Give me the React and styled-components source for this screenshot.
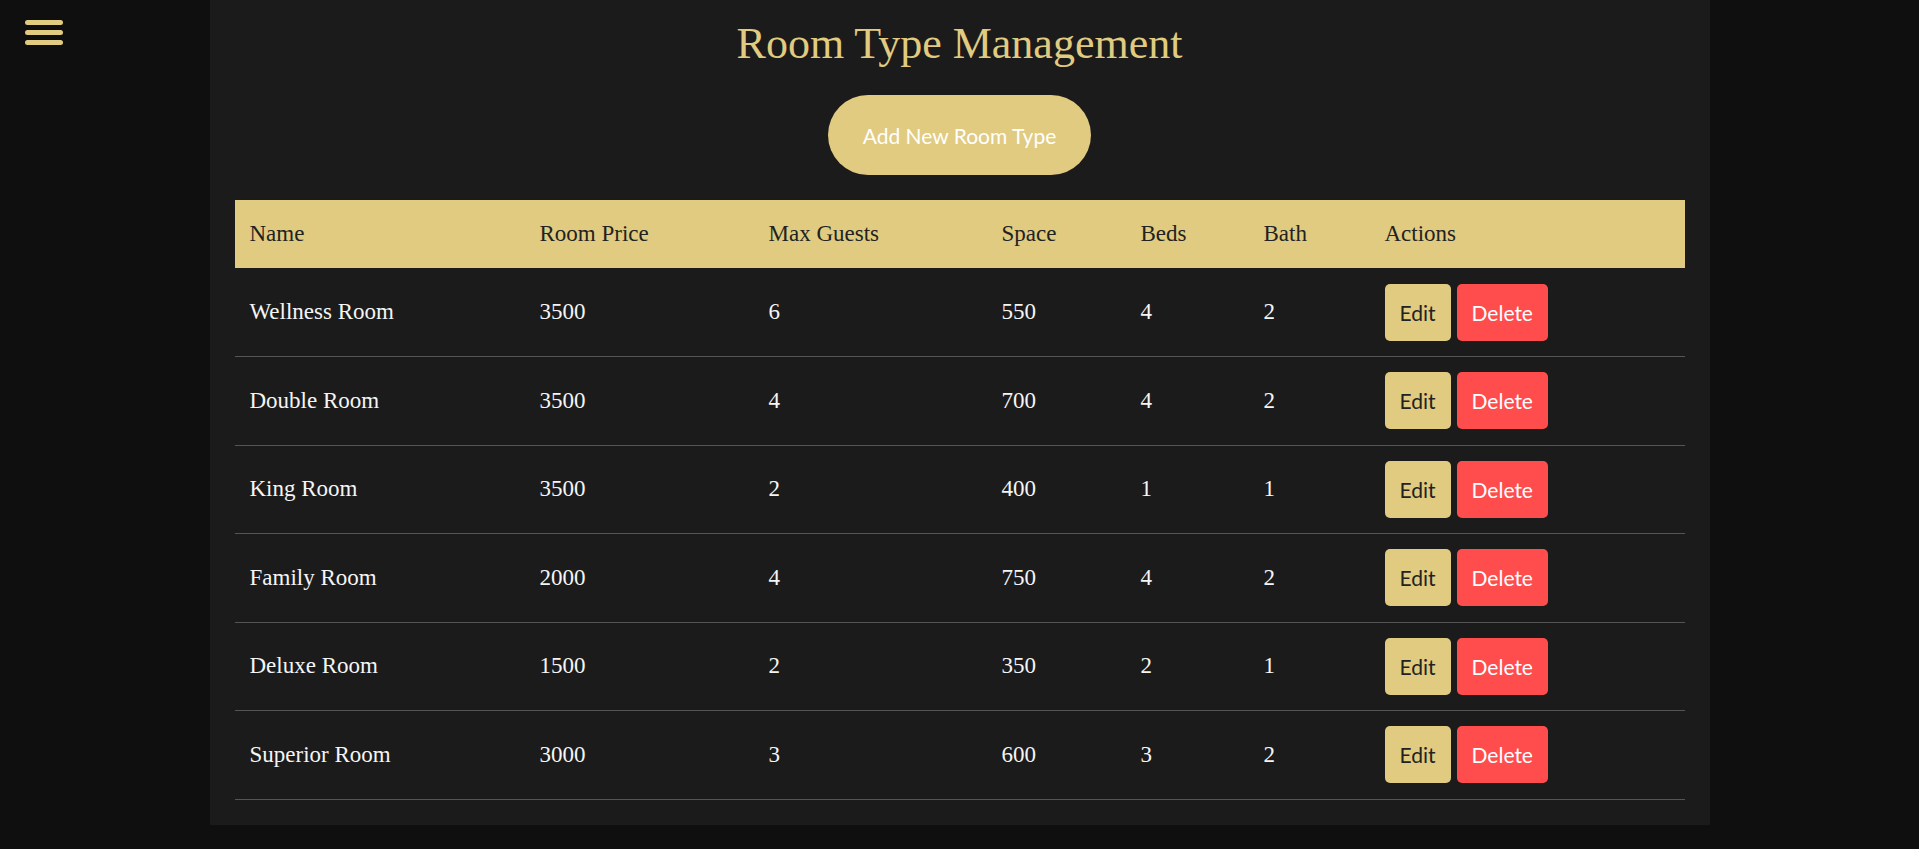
import React from "react";
import styled, { createGlobalStyle } from "styled-components";

const GlobalStyle = createGlobalStyle`
  html, body {
    margin: 0;
    padding: 0;
    background-color: #0f0f0f;
  }
  * {
    box-sizing: border-box;
  }
`;

const roomTypes = [
  { name: "Wellness Room", price: 3500, guests: 6, space: 550, beds: 4, bath: 2 },
  { name: "Double Room", price: 3500, guests: 4, space: 700, beds: 4, bath: 2 },
  { name: "King Room", price: 3500, guests: 2, space: 400, beds: 1, bath: 1 },
  { name: "Family Room", price: 2000, guests: 4, space: 750, beds: 4, bath: 2 },
  { name: "Deluxe Room", price: 1500, guests: 2, space: 350, beds: 2, bath: 1 },
  { name: "Superior Room", price: 3000, guests: 3, space: 600, beds: 3, bath: 2 },
];

const columns = [
  { label: "Name", width: 290 },
  { label: "Room Price", width: 229 },
  { label: "Max Guests", width: 233 },
  { label: "Space", width: 139 },
  { label: "Beds", width: 123 },
  { label: "Bath", width: 121 },
  { label: "Actions", width: 315 },
];

export default function App() {
  return (
    <>
      <GlobalStyle />
      <MenuToggle aria-label="menu">
        <span />
        <span />
        <span />
      </MenuToggle>
      <Panel>
        <Title>Room Type Management</Title>
        <AddButton>Add New Room Type</AddButton>
        <Table>
          <thead>
            <tr>
              {columns.map((c) => (
                <Th key={c.label} $width={c.width}>
                  {c.label}
                </Th>
              ))}
            </tr>
          </thead>
          <tbody>
            {roomTypes.map((r) => (
              <tr key={r.name}>
                <Td>{r.name}</Td>
                <Td>{r.price}</Td>
                <Td>{r.guests}</Td>
                <Td>{r.space}</Td>
                <Td>{r.beds}</Td>
                <Td>{r.bath}</Td>
                <Td>
                  <Actions>
                    <ActionButton>Edit</ActionButton>
                    <ActionButton $danger>Delete</ActionButton>
                  </Actions>
                </Td>
              </tr>
            ))}
          </tbody>
        </Table>
      </Panel>
    </>
  );
}

const MenuToggle = styled.button`
  position: fixed;
  top: 20px;
  left: 25px;
  display: flex;
  flex-direction: column;
  gap: 5px;
  padding: 0;
  border: none;
  background: none;
  cursor: pointer;

  span {
    display: block;
    width: 38px;
    height: 5px;
    border-radius: 3px;
    background-color: #e0cb80;
  }
`;

const Panel = styled.main`
  width: 1500px;
  margin: 0 auto;
  padding: 0 25px 25px;
  background-color: #1b1b1b;
  display: flex;
  flex-direction: column;
  align-items: center;
`;

const Title = styled.h1`
  margin: 0;
  padding-top: 19px;
  font-family: "Liberation Serif", serif;
  font-weight: normal;
  font-size: 44px;
  line-height: 50px;
  color: #e0cb80;
`;

const AddButton = styled.button`
  margin-top: 26px;
  margin-bottom: 25px;
  height: 80px;
  padding: 0 35px;
  border: none;
  border-radius: 40px;
  background-color: #e0cb80;
  color: #ffffff;
  font-family: "Lato", sans-serif;
  font-size: 21px;
  cursor: pointer;
`;

const Table = styled.table`
  width: 100%;
  border-collapse: collapse;
  font-family: "Liberation Serif", serif;
  font-size: 23px;
  text-align: left;
`;

const Th = styled.th`
  width: ${(p) => p.$width}px;
  height: 68px;
  padding: 0 15px;
  background-color: #e0cb80;
  color: #222222;
  font-weight: normal;
`;

const Td = styled.td`
  height: 88.5px;
  padding: 15px;
  color: #f5f5f5;
  border-bottom: 1px solid #555555;
`;

const Actions = styled.div`
  display: flex;
  gap: 6px;
`;

const ActionButton = styled.button`
  height: 57px;
  padding: 0 15px;
  border: none;
  border-radius: 5px;
  background-color: ${(p) => (p.$danger ? "#ff4d4d" : "#e0cb80")};
  color: ${(p) => (p.$danger ? "#ffffff" : "#222222")};
  font-family: "Lato", sans-serif;
  font-size: 21px;
  cursor: pointer;
`;
